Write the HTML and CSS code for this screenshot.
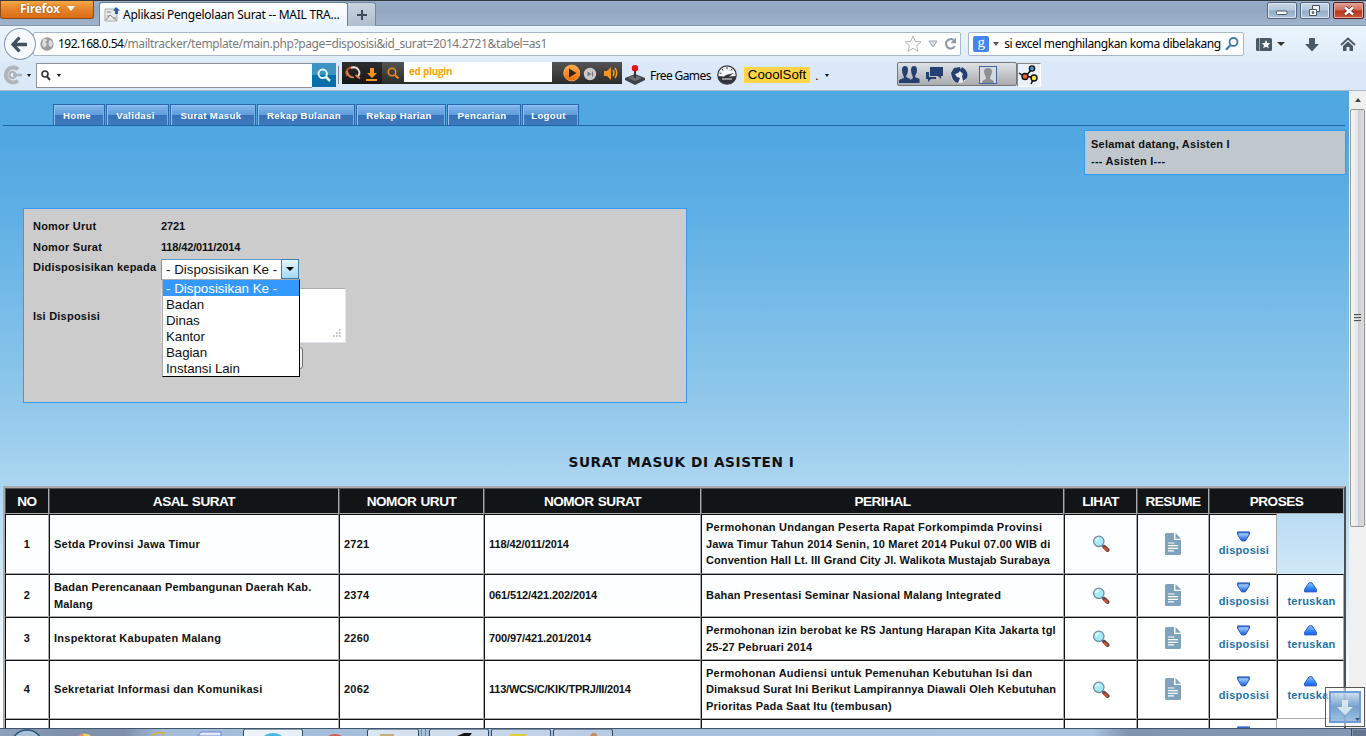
FILE: index.html
```html
<!DOCTYPE html>
<html lang="id">
<head>
<meta charset="utf-8">
<title>Aplikasi Pengelolaan Surat -- MAIL TRACKER</title>
<link rel="stylesheet" href="styles.css">
</head>
<body>
<svg class="defs" aria-hidden="true">
  <defs>
    <linearGradient id="tri" x1="0" y1="0" x2="0" y2="1"><stop offset="0" stop-color="#2b63c8"/><stop offset=".4" stop-color="#7ab4fb"/><stop offset="1" stop-color="#1c52d8"/></linearGradient>
    <linearGradient id="triUp" x1="0" y1="0" x2="0" y2="1"><stop offset="0" stop-color="#8ec4ff"/><stop offset=".6" stop-color="#2f86ff"/><stop offset="1" stop-color="#1f5ce0"/></linearGradient>
    <linearGradient id="orange" x1="0" y1="0" x2="0" y2="1"><stop offset="0" stop-color="#ffb04a"/><stop offset="1" stop-color="#e86a00"/></linearGradient>
    <symbol id="lens" viewBox="0 0 18 18"><path d="M10 10l2 2" stroke="#555" stroke-width="2"/><circle cx="6.800" cy="6.300" r="5.200" fill="#a5ecfb" stroke="#6d8f9f" stroke-width="1.300"/><path d="M4 6Q4.500 3.500 7 3.500" stroke="#effdff" stroke-width="1.800" fill="none"/><path d="M12.300 11.800l3.200 3.200" stroke="#6d4b45" stroke-width="4" stroke-linecap="round"/><path d="M12.300 12.600l3 3" stroke="#e2523a" stroke-width="2"/></symbol>
    <symbol id="doc" viewBox="0 0 16 22"><path d="M1.500 0H9v7h7v13.500q0 1.500-1.500 1.500h-13Q0 22 0 20.500v-19Q0 0 1.500 0zM10.500 0L16 5.700h-5.500z" fill="#7fa2bd"/><path d="M3 10h6.500M3 12.700h10M3 15.300h10M3 17.800h6" stroke="#fff" stroke-width="1.200"/></symbol>
    <symbol id="down" viewBox="0 0 13 11"><path d="M.6.900h11.800v2.600L8.400 9.900H4.600L.6 3.500z" fill="url(#tri)" stroke="#2f58ba" stroke-linejoin="round"/><path d="M2 3h9" stroke="#b7dbff"/></symbol>
    <symbol id="up" viewBox="0 0 13 11"><path d="M5 .8h3l4.400 6.400v2.700H.6V7.200z" fill="url(#triUp)" stroke="#3562c4" stroke-linejoin="round"/></symbol>
  </defs>
</svg>
<div class="window">
  <header class="titlebar">
    <div class="firefox">Firefox<i class="caret"></i></div>
    <div class="tab">
      <svg class="favicon" width="17" height="16" viewBox="0 0 17 16"><path d="M1 2h12v12H1z" fill="#e9e9e9" stroke="#aaa"/><path d="M3 5h4M3 9h2M9 11h3M2 13l4-5 6 5" stroke="#888" fill="none"/><path d="M12 0l4 3.500-2 .3V7h-3V4L9 3.500z" fill="#2f5fa8"/></svg>
      <span>Aplikasi Pengelolaan Surat -- MAIL TRA...</span>
    </div>
    <div class="newtab"><svg width="12" height="12" viewBox="0 0 12 12"><path d="M6 1v10M1 6h10" stroke="#3e4a57" stroke-width="2"/></svg></div>
    <div class="winbtns">
      <div class="wb"><svg width="12" height="6" viewBox="0 0 12 6"><rect x=".5" y="1" width="10.500" height="3.500" rx="1" fill="#fff" stroke="#4c5568"/></svg></div>
      <div class="wb"><svg width="14" height="12" viewBox="0 0 14 12"><path d="M4.500.5h7v6h-7z" fill="#eef3f8" stroke="#4c5568"/><path d="M1.500 4.500h7v6h-7z" fill="#fff" stroke="#4c5568"/><path d="M4 6.700h2v1.800H4z" fill="#7c8da3" stroke="#4c5568" stroke-width=".7"/></svg></div>
      <div class="wb close"><svg width="12" height="10" viewBox="0 0 12 10"><path d="M2 1.500l8 7M10 1.500l-8 7" stroke="#5a2a2c" stroke-width="4"/><path d="M2 1.500l8 7M10 1.500l-8 7" stroke="#fff" stroke-width="2.400"/></svg></div>
    </div>
  </header>
  <div class="navbar">
    <div class="back"><svg width="17" height="17" viewBox="0 0 17 17"><path d="M8.500 1.500L2 8.500l6.500 7M2.500 8.500H16" fill="none" stroke="#42505e" stroke-width="3.300"/></svg></div>
    <div class="urlbar">
      <svg width="14" height="14" viewBox="0 0 14 14"><circle cx="7" cy="7" r="6.700" fill="#9b9b9b"/><path d="M3 2l3-.5 1 2-2 2 2 1-1 3-2 1L2 8zM9 3l3 1 1 3-2 3-2-1-.5-3z" fill="#ddd"/></svg>
      <span class="url"><b>192.168.0.54</b>/mailtracker/template/main.php?page=disposisi&amp;id_surat=2014.2721&amp;tabel=as1</span>
      <svg class="star" width="18" height="17" viewBox="0 0 18 17"><path d="M9 1l2.300 5.300 5.700.6-4.300 3.800 1.300 5.600-5-3-5 3 1.300-5.600L1 6.900l5.700-.6z" fill="#fff" stroke="#b2b2b2"/></svg>
      <svg class="drop" width="10" height="8" viewBox="0 0 10 8"><path d="M1 1h8L5 7z" fill="#dfe3e8" stroke="#9aa3ad"/></svg>
      <svg class="reload" width="13" height="13" viewBox="0 0 13 13"><path d="M10.800 9.200A4.700 4.700 0 1 1 9.500 3" fill="none" stroke="#8a99a8" stroke-width="2"/><path d="M12 .5v5.800H6.500z" fill="#8a99a8"/></svg>
    </div>
    <div class="searchbox">
      <div class="goog">g</div><i class="caret sm"></i>
      <span>si excel menghilangkan koma dibelakang</span>
      <svg width="14" height="14" viewBox="0 0 14 14"><circle cx="8.500" cy="5" r="4" fill="none" stroke="#3d7ab5" stroke-width="1.800"/><path d="M5.500 8L1 12.800" stroke="#3d7ab5" stroke-width="2.300"/></svg>
    </div>
    <svg class="bm" width="17" height="15" viewBox="0 0 17 15"><rect x="0" y="1" width="16" height="13" rx="1.500" fill="#4b5865"/><path d="M3.500 1v13" stroke="#9aa5b0"/><path d="M10 3l1.300 2.900 3 .3-2.300 2 .8 3.100L10 9.800l-2.800 1.500.8-3.100-2.300-2 3-.3z" fill="#fff"/></svg>
    <i class="caret nav"></i>
    <svg class="dl" width="16" height="15" viewBox="0 0 16 15"><path d="M5 1h6v6h4l-7 7.500L1 7h4z" fill="#4b5865"/></svg>
    <svg class="home" width="16" height="15" viewBox="0 0 16 15"><path d="M1 8l7-6.500L15 8" fill="none" stroke="#4b5865" stroke-width="1.800"/><path d="M3 9l5-4.500L13 9v5H9.500v-4h-3v4H3z" fill="#4b5865"/></svg>
  </div>
  <div class="toolbar">
    <svg class="cclogo" width="20" height="20" viewBox="0 0 20 20"><path d="M16 4.200A7.500 7.500 0 1 0 16 15.800" fill="none" stroke="#b0b5bb" stroke-width="4"/><circle cx="10.500" cy="10" r="3" fill="#fff" stroke="#b0b5bb" stroke-width="2.500"/><path d="M11 10h9" stroke="#b0b5bb" stroke-width="2.500"/></svg>
    <i class="caret tiny"></i>
    <div class="tsearch"><svg width="10" height="11" viewBox="0 0 10 11"><circle cx="4" cy="4" r="3" fill="none" stroke="#333" stroke-width="1.700"/><path d="M6 6.500l3 3.500" stroke="#333" stroke-width="2"/></svg><i class="caret tiny"></i></div>
    <div class="tgo"><svg width="14" height="14" viewBox="0 0 14 14"><circle cx="5.700" cy="5.700" r="4.200" fill="none" stroke="#e6f6ff" stroke-width="2"/><path d="M9 9l4 4" stroke="#e6f6ff" stroke-width="2.500"/></svg></div>
    <i class="sep"></i>
    <div class="player">
      <svg width="40" height="22" viewBox="0 0 40 22"><path d="M5.500 14A6 5.500 0 0 1 12 5.500" stroke="#c24d2a" stroke-width="2" fill="none"/><path d="M9 5.800Q14 4 16.500 8T15 15" stroke="#e8e0dc" stroke-width="1.800" fill="none"/><path d="M5 9Q6 15.500 12 15.500M13.500 13l4.500 3.500" stroke="#e0845c" stroke-width="1.700" fill="none"/><path d="M28 6h4v5h3l-5 5-5-5h3zM24 17h11v2H24z" fill="#f7941d"/></svg>
      <div class="pq"><svg width="12" height="12" viewBox="0 0 12 12"><circle cx="5" cy="5" r="3.800" fill="none" stroke="#f08a1c" stroke-width="1.600"/><path d="M8 8l3.500 3.500" stroke="#f08a1c" stroke-width="2"/></svg></div>
      <div class="pfield">ed plugin</div>
      <svg width="70" height="21" viewBox="0 0 70 21"><circle cx="19.700" cy="11" r="8" fill="url(#orange)" stroke="#ffb96a" stroke-width=".7"/><path d="M17 6.500l7.500 4.500-7.500 4.500z" fill="#2b211c"/><circle cx="38" cy="12" r="6.200" fill="#c9c9c9"/><path d="M35.500 9.500l4 2.500-4 2.500zM40 9.500h1v5h-1z" fill="#777"/><path d="M52 9h3l4-4v13l-4-4h-3z" fill="#f7941d"/><path d="M61 8q2 3 0 6M63 6q3.500 5 0 10" stroke="#f7941d" stroke-width="1.500" fill="none"/></svg>
    </div>
    <svg class="joy" width="20" height="20" viewBox="0 0 20 20"><path d="M0 13l10-4 10 4v2l-10 5-10-5z" fill="#3f4246"/><path d="M3 13l7-3 7 3-7 3z" fill="#6b6e72"/><path d="M9 5h2v8H9z" fill="#333"/><circle cx="10" cy="3.300" r="3.200" fill="#e8101c"/></svg>
    <span class="fg">Free Games</span>
    <svg class="gauge" width="20" height="20" viewBox="0 0 20 20"><circle cx="10" cy="10" r="9.200" fill="#f4f6f8" stroke="#3a3d42" stroke-width="1.300"/><path d="M1 11l6 .5 2-1.500 8-2-5 3.500 7-.5q-1 8-9 8t-9-8z" fill="#33363b"/><path d="M5 14h10" stroke="#eee"/><path d="M10 2v2M5 4l1 1.500M15 4l-1 1.500M2.500 8l2 .5" stroke="#333"/></svg>
    <span class="cs">CooolSoft</span><span class="dot">.</span><i class="caret tiny"></i>
    <div class="social">
      <svg width="118" height="22" viewBox="0 0 118 22"><g fill="#263f73"><path d="M1 20v-3l5-2-.5-2Q4 10 4 7q0-4 3-4t3 4q0 3-1.500 5l-.5 2 4 2v4z"/><path d="M12 20v-3l3-2-.5-2Q13 10 13 7q0-4 3-4t3 4q0 3-1.500 5l-.5 2 4.500 2v4z"/><path d="M32 4h13v9h-2v3l-3-3h-8z"/><path d="M28 9h3v5h7v2h-5l-3 3v-3h-2z"/></g><circle cx="61" cy="12" r="8.200" fill="#e4e7ea"/><path d="M53 10l3-5 6-1 1 3-3 3-3 1 2 3 3 1-2 5q-6-1-7-10zM64 4q7 4 5 11l-4 3-1-5 1-2-3-3z" fill="#263f73"/><rect x="81.500" y="3.500" width="17" height="17" fill="#d7dadd" stroke="#43669f"/><path d="M84 20q0-3 4-4l-.5-3Q86 11 86 8.500 86 5 90 5t4 3.500q0 2.500-1.500 4.500l-.5 3q4 1 4 4z" fill="#8d9094"/></svg>
    </div>
    <div class="share"><svg width="22" height="22" viewBox="0 0 22 22"><path d="M1 9l6 4 7-8M8 12l8 2-3 6" fill="none" stroke="#111" stroke-width="1.500"/><circle cx="7" cy="12.500" r="3" fill="#f4622d" stroke="#111" stroke-width="1.400"/><circle cx="14" cy="4.500" r="2.600" fill="#3fa0e8" stroke="#111" stroke-width="1.400"/><circle cx="16" cy="14" r="3" fill="#f8e83a" stroke="#111" stroke-width="1.400"/></svg></div>
  </div>

  <div class="view">
    <main class="page">
      <nav class="menu">
        <a class="w52">Home</a><a class="w63">Validasi</a><a class="w86">Surat Masuk</a><a class="w98">Rekap Bulanan</a><a class="w90">Rekap Harian</a><a class="w74">Pencarian</a><a class="w57">Logout</a>
      </nav>
      <div class="welcome">Selamat datang, Asisten I<br>--- Asisten I---</div>
      <section class="form">
        <div class="frow"><label>Nomor Urut</label><span class="num">2721</span></div>
        <div class="frow"><label>Nomor Surat</label><span class="num">118/42/011/2014</span></div>
        <div class="frow sel"><label>Didisposisikan kepada</label>
          <div class="select"><span>- Disposisikan Ke -</span><div class="sbtn"><i class="caret blk"></i></div>
            <ul class="options"><li class="on">- Disposisikan Ke -</li><li>Badan</li><li>Dinas</li><li>Kantor</li><li>Bagian</li><li>Instansi Lain</li></ul>
          </div>
        </div>
        <div class="frow area"><label>Isi Disposisi</label><div class="textarea"><svg width="9" height="9" viewBox="0 0 9 9"><path d="M7 1h1.500M7 4h1.500M4 4h1.500M7 7h1.500M4 7h1.500M1 7h1.500" stroke="#aaa" stroke-width="1.500"/></svg></div></div>
        <div class="frow btn"><label></label><div class="submit"></div></div>
      </section>
      <h1>SURAT MASUK DI ASISTEN I</h1>
      <table>
        <colgroup><col class="c1"><col class="c2"><col class="c3"><col class="c4"><col class="c5"><col class="c6"><col class="c7"><col class="c8"><col class="c9"></colgroup>
        <tr class="h26"><th>NO</th><th>ASAL SURAT</th><th>NOMOR URUT</th><th>NOMOR SURAT</th><th>PERIHAL</th><th>LIHAT</th><th>RESUME</th><th colspan="2">PROSES</th></tr>
        <tr class="h60"><td>1</td><td class="wide">Setda Provinsi Jawa Timur</td><td>2721</td><td class="num">118/42/011/2014</td><td><span class="wide">Permohonan Undangan Peserta Rapat Forkompimda Provinsi</span><br><span class="snug">Jawa Timur Tahun 2014 Senin, 10 Maret 2014 Pukul 07.00 WIB di</span><br><span class="tight">Convention Hall Lt. III Grand City Jl. Walikota Mustajab Surabaya</span></td><td><svg class="lens"><use href="#lens"/></svg></td><td><svg class="doc"><use href="#doc"/></svg></td><td><svg class="arr"><use href="#down"/></svg><a>disposisi</a></td></tr>
        <tr class="h43"><td>2</td><td class="snug">Badan Perencanaan Pembangunan Daerah Kab.<br>Malang</td><td>2374</td><td class="num">061/512/421.202/2014</td><td>Bahan Presentasi Seminar Nasional Malang Integrated</td><td><svg class="lens"><use href="#lens"/></svg></td><td><svg class="doc"><use href="#doc"/></svg></td><td><svg class="arr"><use href="#down"/></svg><a>disposisi</a></td><td><svg class="arr"><use href="#up"/></svg><a>teruskan</a></td></tr>
        <tr class="h43"><td>3</td><td class="wide">Inspektorat Kabupaten Malang</td><td>2260</td><td class="num">700/97/421.201/2014</td><td class="snug">Permohonan izin berobat ke RS Jantung Harapan Kita Jakarta tgl<br>25-27 Pebruari 2014</td><td><svg class="lens"><use href="#lens"/></svg></td><td><svg class="doc"><use href="#doc"/></svg></td><td><svg class="arr"><use href="#down"/></svg><a>disposisi</a></td><td><svg class="arr"><use href="#up"/></svg><a>teruskan</a></td></tr>
        <tr class="h59"><td>4</td><td class="wider">Sekretariat Informasi dan Komunikasi</td><td>2062</td><td class="num long">113/WCS/C/KIK/TPRJ/II/2014</td><td><span class="wide">Permohonan Audiensi untuk Pemenuhan Kebutuhan Isi dan</span><br><span class="snug">Dimaksud Surat Ini Berikut Lampirannya Diawali Oleh Kebutuhan</span><br>Prioritas Pada Saat Itu (tembusan)</td><td><svg class="lens"><use href="#lens"/></svg></td><td><svg class="doc"><use href="#doc"/></svg></td><td><svg class="arr"><use href="#down"/></svg><a>disposisi</a></td><td><svg class="arr"><use href="#up"/></svg><a>teruskan</a></td></tr>
        <tr class="h43 last"><td></td><td></td><td></td><td></td><td></td><td></td><td></td><td><svg class="arr"><use href="#down"/></svg></td><td class="bare"></td></tr>
      </table>
    </main>
    <div class="scroll"><div class="sup"><i class="caret upc"></i></div><div class="thumb"><i></i><i></i><i></i></div></div>
  </div>
  <footer class="taskbar">
    <svg width="1366" height="8" viewBox="0 0 1366 8">
      <defs><linearGradient id="tb" x1="0" x2="1366" gradientUnits="userSpaceOnUse"><stop offset="0" stop-color="#8ea2bd"/><stop offset=".04" stop-color="#7f93ae"/><stop offset=".09" stop-color="#7e90aa"/><stop offset=".12" stop-color="#a3bddb"/><stop offset=".8" stop-color="#a9c3e0"/><stop offset=".825" stop-color="#8094b0"/><stop offset="1" stop-color="#8497b2"/></linearGradient><linearGradient id="tk"><stop offset="0" stop-color="#eef4fa"/><stop offset="1" stop-color="#b6cae2"/></linearGradient></defs>
      <rect width="1366" height="8" fill="url(#tb)"/>
      <g stroke="#34495f"><path d="M243.500 9V3q0-2 2-2h55q2 0 2 2v6zM367.500 9V3q0-2 2-2h47q2 0 2 2v6zM429.500 9V3q0-2 2-2h55q2 0 2 2v6zM491.500 9V3q0-2 2-2h55q2 0 2 2v6zM553.500 9V3q0-2 2-2h55q2 0 2 2v6z" fill="url(#tk)"/><path d="M421.500 1v8M425.500 1v8" stroke="#6e87a5"/></g>
      <circle cx="27" cy="18" r="16" fill="#a9c2d9" stroke="#275575" stroke-width="1.500"/>
      <circle cx="84" cy="14" r="8.500" fill="#ec8d62"/><path d="M83 6q6-1 9 3h-8z" fill="#efd46a"/>
      <path d="M151 8q6-5 13-3l-2 4" fill="none" stroke="#d9b23c" stroke-width="1.500"/>
      <path d="M198 8l3-4h20v4z" fill="#e2e9fa" stroke="#6f86c7"/>
      <ellipse cx="273" cy="11" rx="10" ry="6" fill="#46b5e3"/><ellipse cx="335" cy="12" rx="9" ry="6" fill="#d65a50"/>
      <path d="M380 6h14v3h-14z" fill="#c4ad7d"/><path d="M457 8l7-3h8l-3 4z" fill="#161616"/><path d="M510 6h18l-4 3h-14z" fill="#ddd03b"/><path d="M590 8l2-3q5-1 6 4z" fill="#c58f62"/>
      <path d="M0 .5h1366" stroke="#40566d"/><path d="M1351.500 1v8" stroke="#3d4d60"/><path d="M1353 2h13v6h-13z" fill="#62758c"/>
    </svg>
  </footer>
  <div class="godown"><div><svg width="30" height="30" viewBox="0 0 30 30"><path d="M12 8h6v7h5l-8 8-8-8h5z" fill="#eef4fa" opacity=".8"/><path d="M25 26h5l-2.500 3z" fill="#36587f"/></svg></div></div>
</div>
</body>
</html>
```
FILE: styles.css
```css
* { box-sizing: border-box; }
body { margin: 0; overflow: hidden; font-family: "Liberation Sans", Arial, sans-serif; }
svg { display: block; flex: none; }
.defs { position: absolute; width: 0; height: 0; }
.window { position: relative; width: 1366px; height: 736px; display: flex; flex-direction: column; overflow: hidden; }
.caret { flex: none; width: 0; height: 0; border: 4px solid transparent; border-bottom: 0; border-top: 5px solid #fff; }
.caret.sm { border-width: 4px 3px 0; border-top-color: #555; }
.caret.nav { border-width: 4px 4px 0; border-top-color: #333; margin-left: 4px; }
.caret.tiny { border-width: 3px 2px 0; border-top-color: #111; }
.caret.blk { border-width: 4px 4px 0; border-top-color: #000; }
.caret.upc { border: 3px solid transparent; border-top: 0; border-bottom: 4px solid #444; }

/* Browser chrome */
.titlebar { height: 26px; flex: none; display: flex; border-top: 1px solid #333940; border-bottom: 1px solid #8496ad; background: linear-gradient(#99aec9, #92a7c0 40%, #9fb3cc); }
.firefox { width: 94px; height: 18px; padding-left: 19px; margin-right: 5px; display: flex; align-items: center; gap: 7px; color: #fff; font: bold 12px/15px "Open Sans", sans-serif; letter-spacing: -.3px; text-shadow: 0 0 2px #8a4200; background: linear-gradient(#f4a944, #e6852c 45%, #db6b12); border: 1px solid #8d4a16; border-top: 0; border-radius: 0 0 3px 3px; padding-bottom: 2px; }
.tab { width: 249px; height: 25px; margin-top: 1px; display: flex; align-items: center; gap: 2px; padding: 1px 0 2px 4px; background: linear-gradient(#fdfeff, #e9f2fb); border: 1px solid #6e7f95; border-bottom: 0; border-radius: 3px 3px 0 0; font: 12px/16px "Noto Sans", sans-serif; white-space: nowrap; }
.tab span { letter-spacing: -.25px; }
.newtab { width: 28px; height: 24px; margin-top: 1px; display: flex; align-items: center; justify-content: center; background: linear-gradient(#c8d3df, #afbdcd); border: 1px solid #75869b; border-left: 0; border-bottom: 0; border-radius: 0 3px 0 0; }
.winbtns { display: flex; gap: 3px; margin: 1px 2px 0 auto; }
.wb { width: 30px; height: 17px; display: flex; align-items: center; justify-content: center; border: 1px solid #53657d; border-radius: 2px; background: linear-gradient(#c9d7e7, #b4c6db 48%, #94aac5 52%, #abc3db); box-shadow: inset 0 0 0 1px #dbe6f1; }
.wb:first-child { padding-top: 4px; }
.wb.close { width: 31px; border-color: #571a20; background: linear-gradient(#dfa396, #cd6a56 48%, #b9301b 52%, #cf5a3c); box-shadow: inset 0 0 0 1px #e5a99c; }
.navbar { height: 35px; flex: none; display: flex; align-items: center; padding: 1px 10px 0 4px; background: linear-gradient(#ebf4fd, #dfecf9); }
.back { width: 32px; height: 32px; margin-right: -3px; z-index: 1; display: flex; align-items: center; justify-content: center; background: #f6f9fd; border: 1px solid #8797a9; border-radius: 50%; }
.urlbar { width: 929px; height: 24px; margin-bottom: 1px; display: flex; align-items: center; padding-left: 6px; background: #fff; border: 1px solid #a9b7c6; border-radius: 2px; }
.url { margin-left: 4px; width: 846px; color: #7a7a7a; font: 12px/16px "Noto Sans", sans-serif; white-space: nowrap; letter-spacing: -.39px; padding-top: 1px; }
.url b { font-weight: 400; color: #000; letter-spacing: -.5px; }
.drop { margin-left: 6px; } .reload { margin-left: 6px; }
.searchbox { width: 276px; height: 24px; margin: 0 12px 1px 7px; display: flex; align-items: center; padding-left: 4px; background: #fff; border: 1px solid #a9b7c6; border-radius: 2px; font: 12px/16px "Noto Sans", sans-serif; white-space: nowrap; }
.goog { width: 16px; height: 16px; margin-right: 4px; border-radius: 2px; background: #4285f4; color: #fff; font: 15px/12px "Liberation Serif", serif; text-align: center; }
.searchbox span { margin-left: 5px; width: 221px; letter-spacing: -.41px; padding-top: 1px; }
.dl { margin-left: 19px; } .home { margin-left: 20px; }
.toolbar { height: 30px; flex: none; display: flex; align-items: center; padding: 0 0 1px 2px; background: #dae8f7; border-bottom: 1px solid #aab9cc; }
.cclogo + .caret { margin: 0 5px; }
.tsearch { width: 276px; height: 25px; display: flex; align-items: center; gap: 6px; padding-left: 4px; background: #fff; border: 1px solid #8d9298; border-right: 0; }
.tgo { width: 24px; height: 24px; display: flex; align-items: center; justify-content: center; background: linear-gradient(#3d94c2 50%, #066fa9 50%); }
.sep { width: 1px; height: 18px; margin: 0 3px 0 2px; background: #7e8794; }
.player { width: 280px; height: 22px; margin-bottom: 4px; display: flex; background: linear-gradient(#535353, #2b2b2b); }
.player > svg:first-child { background: linear-gradient(#2e2e2e, #161616); }
.pq { width: 22px; display: flex; align-items: center; justify-content: center; }
.pfield { width: 148px; height: 20px; background: #fff; color: #ffa500; font: bold 10px/19px "Open Sans", sans-serif; letter-spacing: -.3px; padding-left: 5px; }
.joy { margin: 0 5px 0 3px; }
.fg { width: 67px; font: 12px/16px "Noto Sans", sans-serif; white-space: nowrap; letter-spacing: -.6px; padding-top: 2px; }
.cs { width: 66px; height: 16px; margin-left: 7px; background: #ffd545; font-size: 13.300px; line-height: 16px; text-align: center; }
.dot { margin: 0 6px 0 5px; font-size: 13px; }
.social { width: 120px; height: 24px; margin: 0 0 2px 68px; background: linear-gradient(#dfe2e5, #a9abae); border: 1px solid #777; border-radius: 2px; }
.share { width: 24px; height: 24px; border: 1px solid #fff; border-top-color: #888; border-left-color: #888; background: #eaf1f9; }

/* Page */
.view { height: 637px; flex: none; display: flex; overflow: hidden; }
.page { width: 1349px; height: 637px; overflow: hidden; background: linear-gradient(#50a8e0 0, #51a8e0 50px, #5eafe5 120px, #93c9eb 320px, #add6f1 395px, #c6e2f5 455px, #fff 600px); color: #111; font-weight: bold; font-size: 11px; }
.menu { display: flex; gap: 1px; height: 35px; margin: 0 4px 0 3px; padding: 13px 0 0 50px; border-bottom: 1px solid #1d64a8; }
.menu a { height: 21px; padding-right: 4px; border: 1px solid #2767ac; border-bottom: 0; background: linear-gradient(#84b8ee, #5f9ddc 48%, #3673b8 52%, #3e79bb); box-shadow: inset 1px 1px 0 #93c2f3, inset -1px 0 0 #78aee6; color: #fff; font-size: 9.600px; line-height: 22px; text-align: center; letter-spacing: .35px; white-space: nowrap; }
.w52 { width: 52px; } .w63 { width: 63px; } .w86 { width: 86px; } .w98 { width: 98px; } .w90 { width: 90px; } .w74 { width: 74px; } .w57 { width: 57px; }
.welcome { width: 262px; height: 45px; margin: 4px 3px 0 auto; padding: 5px 6px; border: 1px solid #3399ff; background: #c0c8ce; line-height: 17px; letter-spacing: .24px; }
.form { width: 664px; height: 195px; margin: 33px 0 0 23px; padding: 7px 0 0 9px; border: 1px solid #3399ff; background: #ccc; }
.frow { display: flex; height: 21px; line-height: 20px; letter-spacing: .22px; }
.frow label { width: 128px; white-space: nowrap; }
.frow .num { letter-spacing: -.15px; }
.sel { height: 28px; line-height: 18px; }
.select { position: relative; width: 138px; height: 21px; margin-top: 1px; display: flex; background: #fff; border: 1px solid #5e9cc8; font: 13.330px/19px "Liberation Sans", Arial, sans-serif; white-space: nowrap; letter-spacing: 0; }
.select > span { width: 119px; padding-left: 4px; }
.sbtn { width: 18px; height: 20px; display: flex; align-items: center; justify-content: center; border: 1px solid #3c7fb1; background: linear-gradient(#e5f4fc, #a2d8f5); margin: -1px -1px 0 0; }
.options { position: absolute; left: 0; top: 19px; z-index: 2; width: 138px; height: 98px; margin: 0; padding: 0; list-style: none; background: #fff; border: 1px solid #000; border-top-color: #aaa; border-left-color: #aaa; line-height: 18px; }
.options li { padding-left: 3px; height: 16px; letter-spacing: -.08px; }
.options li.on { height: 16px; background: #3399ff; color: #fff; letter-spacing: 0; }
.area { height: 58px; align-items: center; }
.area label { padding-top: 1px; }
.textarea { width: 185px; height: 55px; display: flex; align-items: flex-end; justify-content: flex-end; padding: 4px; background: #fff; border: 1px solid #dfe5ea; border-top-color: #abadb3; }
.btn { height: 25px; }
.submit { width: 141px; height: 22px; margin: 3px 0 0 1px; border: 1px solid #707070; border-radius: 3px; background: #eee; }
h1 { margin: 50px 0 0 14px; height: 33px; font: bold 13.700px/18px "DejaVu Sans", sans-serif; text-align: center; letter-spacing: .57px; }
table { width: 1343px; margin-left: 3px; table-layout: fixed; border-collapse: separate; border-spacing: 0; border: 2px solid #aaa; border-right-color: #4a4f54; }
.c1 { width: 44px; } .c2 { width: 290px; } .c3 { width: 145px; } .c4 { width: 217px; } .c5 { width: 363px; } .c6 { width: 73px; } .c7 { width: 72px; } .c8 { width: 68px; } .c9 { width: 67px; }
th { padding: 0; background: #111518; border: 1px solid #aaa; border-top-color: #555; border-left-color: #555; color: #fff; font-size: 13.600px; letter-spacing: -.5px; word-spacing: 1px; white-space: nowrap; }
td { padding: 0 0 0 4px; vertical-align: middle; background: rgba(255,255,255,.95); border: 1px solid #aaa; border-top-color: #111; border-left-color: #111; line-height: 16.500px; letter-spacing: .2px; white-space: nowrap; }
td:first-child, td:nth-child(n+6) { text-align: center; padding: 0; }
td.num { letter-spacing: -.1px; }
td.num.long { letter-spacing: -.22px; }
.tight { letter-spacing: .09px; }
.snug { letter-spacing: .15px; }
.wide { letter-spacing: .25px; }
.wider { letter-spacing: .31px; }
td.bare { border-color: transparent; }
.h26 { height: 26px; } .h60 { height: 60px; } .h43 { height: 43px; } .h59 { height: 59px; }
.last td { vertical-align: top; padding-top: 6px; }
.lens { width: 18px; height: 18px; margin: 0 auto; }
.doc { width: 16px; height: 22px; margin: 0 auto; position: relative; top: -.5px; }
.arr { width: 13px; height: 11px; margin: 0 auto 1px; }
td a { display: block; color: #1c73ab; line-height: 15px; letter-spacing: .3px; padding-left: 2px; }
.scroll { width: 17px; padding-left: 1px; background: #f0f0f0; }
.sup { height: 18px; display: flex; align-items: center; justify-content: center; }
.thumb { width: 15px; height: 418px; display: flex; flex-direction: column; align-items: center; justify-content: center; gap: 1px; border: 1px solid #979797; border-radius: 2px; background: linear-gradient(90deg, #f5f5f5, #e6e6e8 50%, #cdcfd2 55%, #dcdcdf); }
.thumb i { width: 7px; height: 2px; background: #555; border-bottom: 1px solid #ccc; }
.taskbar { height: 8px; flex: none; overflow: hidden; }
/* Floating scroll helper over the page corner */
.godown { position: absolute; left: 1325px; top: 687px; width: 40px; height: 40px; padding: 3px; border: 1px solid #555; background: rgba(255,255,255,.55); }
.godown div { width: 32px; height: 32px; border: 2px solid #6f9bd8; background: linear-gradient(rgba(195,215,235,.8), rgba(85,138,190,.8) 50%, rgba(135,180,220,.8)); }
.godown svg { margin: -1px; }
```
